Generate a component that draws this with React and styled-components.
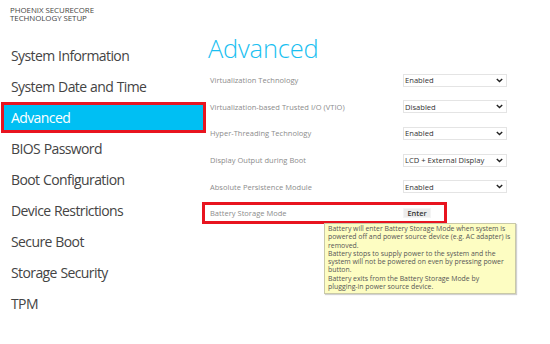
import React from "react";
import styled, { createGlobalStyle } from "styled-components";

const GlobalStyle = createGlobalStyle`
  html, body { margin: 0; padding: 0; background: #ffffff; }
  body { font-family: "Open Sans", "Noto Sans", sans-serif; color: #333; }
  * { box-sizing: border-box; }
`;

const Page = styled.div`
  width: 550px;
  height: 344px;
  display: grid;
  grid-template-columns: 206px 1fr;
  column-gap: 4px;
  overflow: hidden;
  background: #fff;
`;

const Sidebar = styled.aside`
  display: flex;
  flex-direction: column;
  padding-top: 6px;
`;

const Brand = styled.div`
  padding-left: 10px;
  font-size: 7.9px;
  line-height: 8.2px;
  letter-spacing: -0.05px;
  color: #444;
  text-transform: uppercase;
  font-weight: 400;
`;

const Nav = styled.nav`
  margin-top: 18px;
  display: flex;
  flex-direction: column;
  padding-left: 1px;
`;

const NavItem = styled.div`
  height: 31px;
  display: flex;
  align-items: center;
  padding-left: 10px;
  font-size: 14px;
  letter-spacing: -0.6px;
  word-spacing: 0.5px;
  color: ${(p) => (p.$active ? "#ffffff" : "#444444")};
  background: ${(p) => (p.$active ? "#00bff3" : "transparent")};
  outline: ${(p) => (p.$active ? "3px solid #e8141f" : "none")};
  outline-offset: -3px;
  box-shadow: ${(p) => (p.$active ? "inset -5px 0 0 -3px #a9a2f2" : "none")};
`;

const Main = styled.main`
  display: flex;
  flex-direction: column;
  padding-top: 33px;
`;

const Title = styled.h1`
  margin: 0 0 4px -2px;
  font-size: 25.5px;
  line-height: 30px;
  font-weight: 300;
  color: #1bbff1;
  letter-spacing: -0.2px;
`;

const Rows = styled.div`
  display: flex;
  flex-direction: column;
`;

const Row = styled.div`
  position: relative;
  height: 26.6px;
  display: grid;
  grid-template-columns: 193px 104px;
  align-items: center;
`;

const Label = styled.span`
  font-size: 7.5px;
  color: #8c8c8c;
  letter-spacing: 0.02px;
`;

const Select = styled.div`
  height: 13px;
  border: 1px solid #e4e4e4;
  display: flex;
  align-items: center;
  justify-content: space-between;
  padding: 0 3px 0 1px;
  font-size: 7.6px;
  color: #333;
  background: #fff;
`;

const Chevron = () => (
  <svg width="7" height="5" viewBox="0 0 7 5" aria-hidden="true">
    <path d="M0.8 1 L3.5 3.6 L6.2 1" fill="none" stroke="#222" strokeWidth="1.4" />
  </svg>
);

const ButtonCell = styled.div`
  display: flex;
`;

const EnterButton = styled.div`
  width: 28px;
  height: 10px;
  background: #ececec;
  border: 1px solid #f4f4f4;
  display: flex;
  align-items: center;
  justify-content: center;
  font-size: 7.4px;
  font-weight: 600;
  color: #333;
`;

const Annotation = styled.span`
  position: absolute;
  left: -8px;
  top: 2px;
  width: 245px;
  height: 22px;
  border: 3px solid #e8141f;
  pointer-events: none;
`;

const Tooltip = styled.div`
  position: absolute;
  left: 114px;
  top: 23px;
  width: 192px;
  padding: 1px 3px 2px 3px;
  background: #fdfdc2;
  border: 1px solid #c9c9a8;
  box-shadow: 1px 1px 1px rgba(0, 0, 0, 0.18);
  font-size: 6.9px;
  line-height: 8.3px;
  color: #555;
  z-index: 2;
`;

const navItems = [
  "System Information",
  "System Date and Time",
  "Advanced",
  "BIOS Password",
  "Boot Configuration",
  "Device Restrictions",
  "Secure Boot",
  "Storage Security",
  "TPM",
];

const settings = [
  ["Virtualization Technology", "Enabled"],
  ["Virtualization-based Trusted I/O (VTIO)", "Disabled"],
  ["Hyper-Threading Technology", "Enabled"],
  ["Display Output during Boot", "LCD + External Display"],
  ["Absolute Persistence Module", "Enabled"],
];

export default function App() {
  return (
    <>
      <GlobalStyle />
      <Page>
        <Sidebar>
          <Brand>
            Phoenix SecureCore
            <br />
            Technology Setup
          </Brand>
          <Nav>
            {navItems.map((item) => (
              <NavItem key={item} $active={item === "Advanced"}>
                {item}
              </NavItem>
            ))}
          </Nav>
        </Sidebar>
        <Main>
          <Title>Advanced</Title>
          <Rows>
            {settings.map(([label, value]) => (
              <Row key={label}>
                <Label>{label}</Label>
                <Select>
                  <span>{value}</span>
                  <Chevron />
                </Select>
              </Row>
            ))}
            <Row>
              <Label>Battery Storage Mode</Label>
              <ButtonCell>
                <EnterButton>Enter</EnterButton>
              </ButtonCell>
              <Annotation />
              <Tooltip>
                Battery will enter Battery Storage Mode when system is
                <br />
                powered off and power source device (e.g. AC adapter) is
                <br />
                removed.
                <br />
                Battery stops to supply power to the system and the
                <br />
                system will not be powered on even by pressing power
                <br />
                button.
                <br />
                Battery exits from the Battery Storage Mode by
                <br />
                plugging-in power source device.
              </Tooltip>
            </Row>
          </Rows>
        </Main>
      </Page>
    </>
  );
}
